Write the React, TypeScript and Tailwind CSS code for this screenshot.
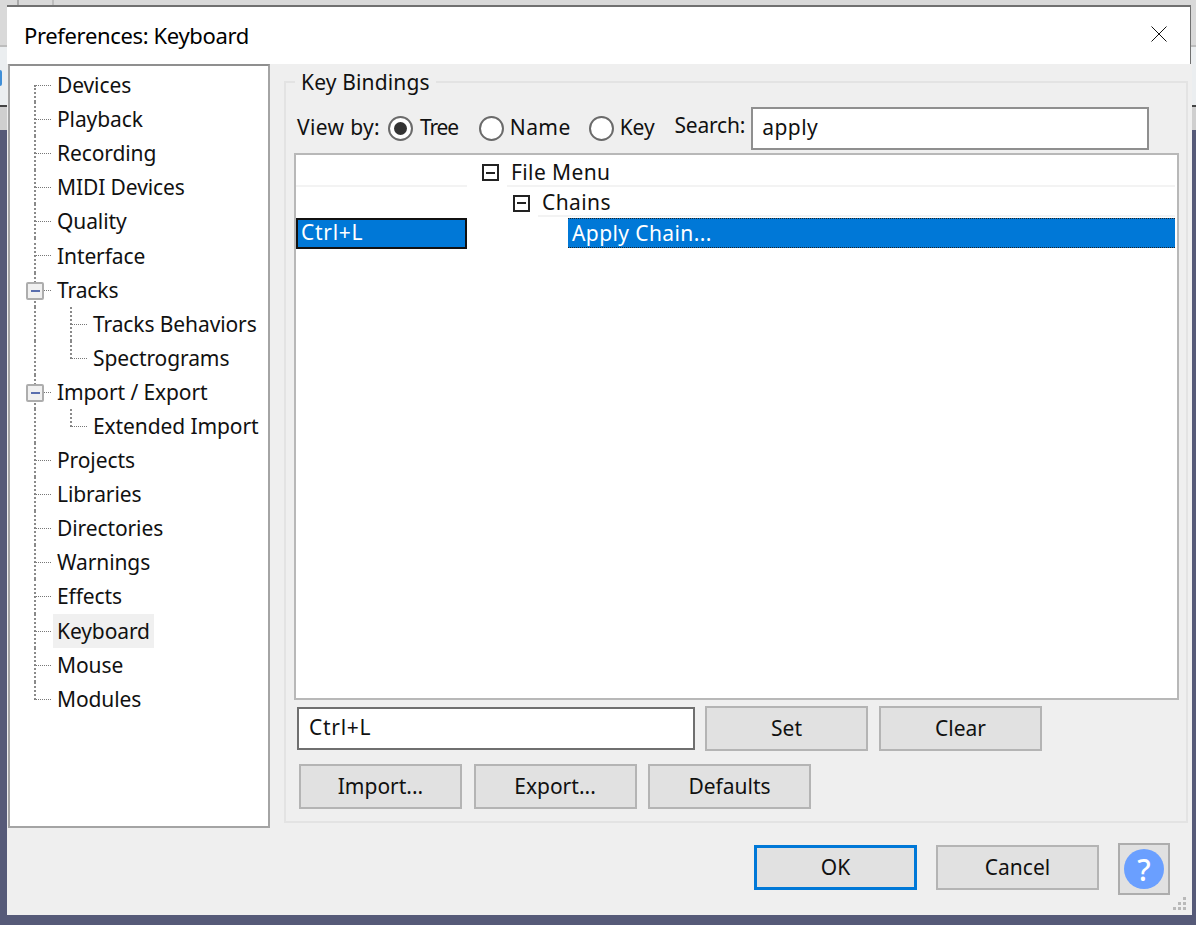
import type { ReactNode } from 'react'

const nodes = [
  { label: 'Devices' },
  { label: 'Playback' },
  { label: 'Recording' },
  { label: 'MIDI Devices' },
  { label: 'Quality' },
  { label: 'Interface' },
  { label: 'Tracks', box: true },
  { label: 'Tracks Behaviors', sub: true },
  { label: 'Spectrograms', sub: true, last: true },
  { label: 'Import / Export', box: true },
  { label: 'Extended Import', sub: true, last: true },
  { label: 'Projects' },
  { label: 'Libraries' },
  { label: 'Directories' },
  { label: 'Warnings' },
  { label: 'Effects' },
  { label: 'Keyboard', selected: true },
  { label: 'Mouse' },
  { label: 'Modules', end: true },
]

function PrefTreeRow({ label, box, sub, last, selected, end, first }: { label: string; box?: boolean; sub?: boolean; last?: boolean; selected?: boolean; end?: boolean; first?: boolean }) {
  return (
    <div className="relative flex h-[34.1px] items-center">
      {/* main trunk */}
      <div className={`absolute left-[24px] w-0 border-l-2 border-dotted border-[#8a8a8a] ${first ? 'top-[17px] bottom-0' : end ? 'top-0 h-[18px]' : 'inset-y-0'}`} />
      {sub && <div className={`absolute left-[60px] w-0 border-l-2 border-dotted border-[#8a8a8a] ${last ? 'top-0 h-[18px]' : 'inset-y-0'}`} />}
      <div className={`absolute top-[17px] h-0 border-t border-dotted border-[#777] ${sub ? 'left-[60px] w-[17px]' : 'left-[24px] w-[17px]'}`} />
      {box && (
        <div className="absolute left-[16px] top-[9px] flex h-[18px] w-[18px] items-center justify-center rounded-[2px] border-2 border-[#adadad] bg-[#f0f0f0]">
          <div className="h-[2px] w-[9px] bg-[#5a6fae]" />
        </div>
      )}
      <span className={`${sub ? 'ml-[79px]' : 'ml-[43px]'} ${selected ? 'bg-[#f0f0f0]' : ''} px-[4px] text-[#111] leading-[34px] whitespace-nowrap`}>{label}</span>
    </div>
  )
}

function Btn({ children, className = '' }: { children: ReactNode; className?: string }) {
  return (
    <div className={`flex h-[45px] w-[163px] items-center justify-center border-2 border-[#b4b4b4] bg-[#e1e1e1] tracking-[0px] text-[#111] ${className}`}>
      {children}
    </div>
  )
}

function Radio({ on }: { on?: boolean }) {
  return (
    <div className="flex h-[25px] w-[25px] shrink-0 items-center justify-center rounded-full border-2 border-[#6a6a6a] bg-white">
      {on && <div className="h-[13px] w-[13px] rounded-full bg-[#333]" />}
    </div>
  )
}

function MinusBox() {
  return (
    <div className="flex h-[17px] w-[17px] shrink-0 items-center justify-center border-2 border-[#222] bg-white">
      <div className="h-[2px] w-[9px] bg-[#222]" />
    </div>
  )
}

export default function App() {
  return (
    <div className='relative h-[925px] w-[1196px] overflow-hidden bg-[#565a78] font-["Noto_Sans","Open_Sans",sans-serif] text-[21px] tracking-[-0.1px]'>
      {/* app window behind the dialog */}
      <div className="h-[47px] border-b-2 border-[#bdbdbd] bg-[#d9d9d9]" />
      <div className="h-[58px] bg-[#ebeef0]" />
      <div className="h-[2px] bg-[#444]" />
      <div className="h-[23px] bg-[#cfcfcf]" />
      <div className="absolute left-0 top-[70px] h-[16px] w-[2px] rounded-r-full bg-[#3f8fd8]" />
      <div className="absolute left-[17px] top-0 h-[5px] w-[2px] bg-[#a9a9a9]" />
      <div className="absolute left-[52px] top-0 h-[5px] w-[2px] bg-[#bdbdbd]" />

      <div className="absolute left-[7px] top-[5px] flex h-[910px] w-[1185px] flex-col">
        <div className="mr-[1px] flex h-[59px] items-center justify-between border-r border-t-2 border-[#707070] bg-white pl-[17px] pr-[23px]">
          <span className="text-[22px] tracking-[-0.35px] text-[#000]">Preferences: Keyboard</span>
          <svg width="16" height="16" viewBox="0 0 16 16" className="mt-[-3px]"><path d="M0.5 0.5 15.5 15.5M15.5 0.5 0.5 15.5" stroke="#111" strokeWidth="1" fill="none" /></svg>
        </div>
        <div className="flex flex-1 flex-col bg-[#efefef] pl-[1px]">
          <div className="flex h-[764px]">
            <div className="h-[764px] w-[262px] shrink-0 border-2 border-[#a4a4a4] border-t-[#8f8f8f] bg-white pt-[2px]">
              <PrefTreeRowList />
            </div>
            <div className="relative ml-[14px] mt-[17px] flex h-[742px] w-[904px] flex-col border-2 border-[#e3e3e3] pl-[11px] pr-[9px]">
              <span className="absolute left-[9px] top-[-16px] bg-[#efefef] px-[6px] leading-[30px] tracking-[0.15px] text-[#111]">Key Bindings</span>
              <div className="mt-[25px] flex h-[40px] items-center text-[#111]">
                <span className="mr-[8px] tracking-[0.35px]">View by:</span>
                <Radio on />
                <span className="ml-[7px] tracking-[-1.2px]">Tree</span>
                <div className="ml-[21px]"><Radio /></div>
                <span className="ml-[6px] tracking-[0.4px]">Name</span>
                <div className="ml-[18px]"><Radio /></div>
                <span className="ml-[6px]">Key</span>
                <span className="mb-[4px] ml-[20px] tracking-[-0.2px]">Search:</span>
                <div className="ml-[6px] flex h-[43px] w-[398px] items-center border-2 border-[#8f8f8f] bg-white pl-[9px] tracking-[0.45px]">apply</div>
              </div>
              <div className="ml-[-3px] mt-[5px] h-[547px] w-[885px] border-2 border-[#b8b8b8] bg-white pt-[1px] tracking-[0.4px] text-[#111]">
                <div className="flex h-[31px] items-center">
                  <div className="h-full w-[171px] border-b-2 border-[#f3f3f3]" />
                  <div className="ml-[15px] mt-[2px] flex items-center gap-[12px]"><MinusBox /><span>File Menu</span></div>
                </div>
                <div className="relative flex h-[30px] items-center">
                  <div className="absolute left-[211px] right-[2px] top-[-2px] h-[2px] bg-[#f3f3f3]" />
                  <div className="ml-[217px] mt-[2px] flex items-center gap-[12px]"><MinusBox /><span>Chains</span></div>
                </div>
                <div className="relative mt-[1px] flex h-[30px] items-center">
                  <div className="absolute left-[242px] right-[2px] top-[-3px] h-[2px] bg-[#f3f3f3]" />
                  <div className="flex h-[31px] w-[171px] items-center border-2 border-[#111] bg-[#0078d7] pl-[3px] tracking-[0.7px] text-white">Ctrl+L</div>
                  <div className="ml-[101px] mr-[2px] flex h-[30px] flex-1 items-center border-y border-dotted border-[#222] bg-[#0078d7] pl-[4px] pt-[1px] text-white">Apply Chain...</div>
                </div>
              </div>
              <div className="mt-[6px] flex items-center gap-[10px]">
                <div className="flex h-[43px] w-[398px] items-center border-2 border-[#6f6f6f] bg-white pb-[1px] pl-[10px] tracking-[0.7px] text-[#111]">Ctrl+L</div>
                <Btn>Set</Btn>
                <Btn className="ml-[1px]">Clear</Btn>
              </div>
              <div className="ml-[2px] mt-[13px] flex gap-[11.5px]">
                <Btn>Import...</Btn>
                <Btn>Export...</Btn>
                <Btn>Defaults</Btn>
              </div>
            </div>
          </div>
          <div className="relative flex flex-1 items-start justify-end pr-[22px] pt-[15px]">
            <div className="flex items-start">
              <Btn className="mt-[2px] !border-[3px] !border-[#0078d7]">OK</Btn>
              <Btn className="ml-[19px] mt-[2px]">Cancel</Btn>
              <div className="ml-[19px] flex h-[52px] w-[52px] items-center justify-center border-2 border-[#adadad] bg-[#e1e1e1]">
                <div className="flex h-[40px] w-[40px] items-center justify-center rounded-full bg-[#6a9fff] text-[30px] font-medium text-white">?</div>
              </div>
            </div>
            <svg width="16" height="16" viewBox="0 0 16 16" className="absolute bottom-[3px] right-[4px]" fill="#b9b9b9">
              <rect x="11" y="1" width="3" height="3" /><rect x="6" y="6" width="3" height="3" /><rect x="11" y="6" width="3" height="3" />
              <rect x="1" y="11" width="3" height="3" /><rect x="6" y="11" width="3" height="3" /><rect x="11" y="11" width="3" height="3" />
            </svg>
          </div>
        </div>
      </div>
    </div>
  )
}

function PrefTreeRowList() {
  return (
    <>
      {nodes.map((n, i) => (
        <PrefTreeRow key={n.label} {...n} first={i === 0} />
      ))}
    </>
  )
}
